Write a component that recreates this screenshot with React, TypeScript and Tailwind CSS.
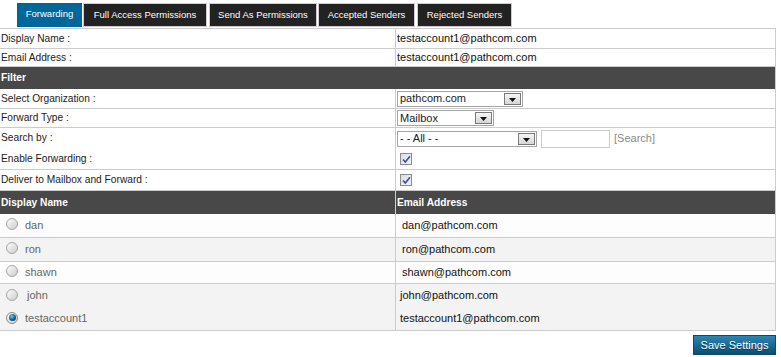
import type { ReactNode } from "react";

const tabs = [
  { label: "Forwarding", width: "w-[65px]", active: true, gap: "" },
  { label: "Full Access Permissions", width: "w-[124px]", active: false, gap: "ml-[1px]" },
  { label: "Send As Permissions", width: "w-[108px]", active: false, gap: "ml-[2px]" },
  { label: "Accepted Senders", width: "w-[97px]", active: false, gap: "ml-[1px]" },
  { label: "Rejected Senders", width: "w-[95px]", active: false, gap: "ml-[2px]" },
];

function DropArrow() {
  return (
    <span className="mr-[1px] flex h-[12px] w-[17px] shrink-0 items-end justify-center border border-[#7a7a7a] bg-gradient-to-b from-[#f6f6f6] to-[#d6d6d6] pb-[2px]">
      <svg width="7" height="4" viewBox="0 0 7 4">
        <path d="M0 0h7L3.5 4z" fill="#111" />
      </svg>
    </span>
  );
}

function Select({ value, width }: { value: string; width: string }) {
  return (
    <div
      className={`${width} flex h-[16px] items-center justify-between border border-[#a5a5a5] bg-white pl-[2px] text-[11px] text-[#1a1a2a]`}
    >
      <span>{value}</span>
      <DropArrow />
    </div>
  );
}

function Checkbox() {
  return (
    <span className="flex h-[12px] w-[12px] items-center justify-center border border-[#8c8c8c] bg-gradient-to-br from-[#dcdce4] to-[#f4f4f8]">
      <svg width="9" height="9" viewBox="0 0 9 9">
        <path d="M1 4.5l2.3 2.5L8 1.2" fill="none" stroke="#3b4fa8" strokeWidth="1.6" />
      </svg>
    </span>
  );
}

function Radio({ checked = false }: { checked?: boolean }) {
  return checked ? (
    <span className="flex h-[12px] w-[12px] shrink-0 items-center justify-center rounded-full border border-[#8a8a8a] bg-gradient-to-br from-[#fbfbfb] to-[#cfcfcf]">
      <span className="block h-[7px] w-[7px] rounded-full bg-[radial-gradient(circle_at_40%_35%,#6ccaf2,#0a5d92_55%,#06304d)]" />
    </span>
  ) : (
    <span className="block h-[12px] w-[12px] shrink-0 rounded-full border border-[#a4a4a4] bg-gradient-to-br from-[#fdfdfd] to-[#cdcdcd]" />
  );
}

interface RowProps {
  label: ReactNode;
  children?: ReactNode;
  height: string;
  last?: boolean;
}

function FormRow({ label, children, height, last = false }: RowProps) {
  return (
    <div className={`flex ${height} ${last ? "" : "border-b border-[#ccc]"}`}>
      <div className="flex w-[396px] shrink-0 items-center border-r border-[#ccc] pl-[1px] text-[10.2px] text-[#222]">
        {label}
      </div>
      <div className="flex flex-1 items-center pl-[1px] text-[11px] text-[#111]">{children}</div>
    </div>
  );
}

const people = [
  { name: "dan", email: "dan@pathcom.com", bg: "bg-[#fdfdfd]", height: "h-[24px]" },
  { name: "ron", email: "ron@pathcom.com", bg: "bg-[#f3f3f3]", height: "h-[24px]" },
  { name: "shawn", email: "shawn@pathcom.com", bg: "bg-[#fdfdfd]", height: "h-[22px]" },
];

export default function App() {
  return (
    <div className="w-[781px] bg-white font-['Liberation_Sans',Arial,sans-serif]">
      <div className="flex pl-[17px] pt-[3px]">
        {tabs.map((tab) => (
          <div
            key={tab.label}
            className={`${tab.width} ${tab.gap} flex h-[24px] justify-center pt-[4px] text-[9.5px] text-white ${
              tab.active ? "bg-[#00679a]" : "border border-[#d2cbd2] bg-[#222]"
            }`}
          >
            {tab.label}
          </div>
        ))}
      </div>

      <div className="mt-[1px] w-[776px] border-t border-r border-[#ccc]">
        <FormRow label="Display Name :" height="h-[20px]">
          testaccount1@pathcom.com
        </FormRow>
        <FormRow label="Email Address :" height="h-[18px]">
          testaccount1@pathcom.com
        </FormRow>

        <div className="flex h-[22px] items-center bg-[#484848] pl-[1px] text-[10.2px] font-bold text-white">
          Filter
        </div>

        <FormRow label="Select Organization :" height="h-[20px]">
          <Select value="pathcom.com" width="w-[126px]" />
        </FormRow>
        <FormRow label="Forward Type :" height="h-[19px]">
          <Select value="Mailbox" width="w-[97px]" />
        </FormRow>

        <div className="flex h-[42px] border-b border-[#ccc]">
          <div className="flex w-[396px] shrink-0 flex-col border-r border-[#ccc] pl-[1px] text-[10.2px] text-[#222]">
            <div className="flex h-[20px] items-center">Search by :</div>
            <div className="flex h-[21px] items-center">Enable Forwarding :</div>
          </div>
          <div className="flex flex-1 flex-col pl-[1px]">
            <div className="flex h-[20px] items-center gap-[4px] pt-[1px]">
              <Select value="- - All - -" width="w-[140px]" />
              <span className="h-[18px] w-[69px] border border-[#ccc] bg-white" />
              <span className="text-[11px] text-[#8a8a8a]">[Search]</span>
            </div>
            <div className="flex h-[21px] items-center pl-[3px] pt-[1px]">
              <Checkbox />
            </div>
          </div>
        </div>

        <FormRow label="Deliver to Mailbox and Forward :" height="h-[21px]">
          <span className="pl-[3px]">
            <Checkbox />
          </span>
        </FormRow>

        <div className="flex h-[23px] bg-[#484848] text-[10.2px] font-bold text-white">
          <div className="flex w-[396px] shrink-0 items-center border-r border-[#ccc] pl-[1px]">
            Display Name
          </div>
          <div className="flex items-center pl-[1px]">Email Address</div>
        </div>

        {people.map((p) => (
          <div key={p.name} className={`flex ${p.height} ${p.bg} border-b border-[#ccc]`}>
            <div className="flex w-[396px] shrink-0 items-center gap-[7px] border-r border-[#ccc] pl-[6px] text-[11px] text-[#666]">
              <span className="-mt-[3px] block">
                <Radio />
              </span>
              <span>{p.name}</span>
            </div>
            <div className="flex items-center pl-[6px] text-[11px] text-[#111]">{p.email}</div>
          </div>
        ))}

        <div className="flex h-[47px] border-b border-[#ccc] bg-[#f3f3f3]">
          <div className="flex w-[396px] shrink-0 flex-col border-r border-[#ccc] pl-[6px] text-[11px] text-[#666]">
            <div className="flex h-[23px] items-center gap-[9px]">
              <span className="-mt-[2px] block">
                <Radio />
              </span>
              <span>john</span>
            </div>
            <div className="flex h-[23px] items-center gap-[7px]">
              <span className="-mt-[2px] block">
                <Radio checked />
              </span>
              <span>testaccount1</span>
            </div>
          </div>
          <div className="flex flex-col pl-[4px] text-[11px] text-[#111]">
            <div className="flex h-[23px] items-center">john@pathcom.com</div>
            <div className="flex h-[23px] items-center">testaccount1@pathcom.com</div>
          </div>
        </div>
      </div>

      <div className="mt-[4px] flex w-[776px] justify-end">
        <button className="h-[20px] w-[83px] border border-[#0b4a6b] bg-gradient-to-b from-[#2b86b3] to-[#0a4f73] text-[11px] text-white [text-shadow:0_1px_0_#063650]">
          Save Settings
        </button>
      </div>
    </div>
  );
}
